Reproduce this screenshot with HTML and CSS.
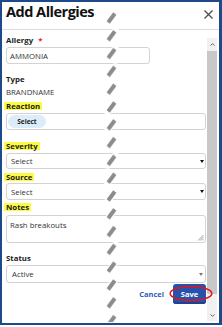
FILE: index.html
```html
<!DOCTYPE html>
<html lang="en">
<head>
<meta charset="utf-8">
<title>Add Allergies</title>
<link rel="stylesheet" href="styles.css">
</head>
<body>
<div class="frame">
  <header class="head">
    <h1 class="title">Add Allergies</h1>
    <svg class="close" viewBox="0 0 9 9" aria-label="Close"><path d="M0.5 0.5 L8.5 8.5 M8.5 0.5 L0.5 8.5" stroke="#4a4a4a" stroke-width="1.2" fill="none"/></svg>
  </header>
  <div class="body">
    <form class="content">
      <div class="label l-allergy">Allergy <span class="req">*</span></div>
      <div class="box short i-allergy">AMMONIA</div>

      <div class="label l-type">Type</div>
      <div class="value">BRANDNAME</div>

      <div class="label hlabel l-reaction"><span class="hl">Reaction</span></div>
      <div class="box multi"><span class="pill">Select</span></div>

      <div class="label hlabel l-severity"><span class="hl">Severity</span></div>
      <div class="box select s-severity"><span>Select</span><span class="caret"></span></div>

      <div class="label hlabel l-source"><span class="hl">Source</span></div>
      <div class="box select s-source"><span>Select</span><span class="caret"></span></div>

      <div class="label hlabel l-notes"><span class="hl">Notes</span></div>
      <div class="box notes"><span class="notes-text">Rash breakouts</span>
        <svg class="grip" viewBox="0 0 7 7"><path d="M6.5 1 L1 6.5 M6.5 3 L3 6.5 M6.5 5 L5 6.5" stroke="#9a9a9a" stroke-width="0.9" fill="none"/></svg>
      </div>

      <div class="label l-status">Status</div>
      <div class="box select s-status"><span>Active</span><span class="caret grey"></span></div>

      <div class="actions">
        <span class="cancel">Cancel</span>
        <span class="save">Save<svg class="ring" viewBox="0 0 44 17"><ellipse cx="22" cy="8.5" rx="20.8" ry="7" fill="none" stroke="#e3141c" stroke-width="1.5"/></svg></span>
      </div>
    </form>
    <div class="sb">
      <span class="sb-btn sb-up"><svg viewBox="0 0 5 3"><path d="M0.5 2.6 L2.5 0.6 L4.5 2.6" stroke="#555" stroke-width="0.9" fill="none"/></svg></span>
      <span class="sb-thumb"></span>
      <span class="sb-track"></span>
      <span class="sb-btn sb-down"><svg viewBox="0 0 5 3"><path d="M0.5 0.4 L2.5 2.4 L4.5 0.4" stroke="#555" stroke-width="0.9" fill="none"/></svg></span>
    </div>
  </div>
  <svg class="cuts" viewBox="0 0 16 321" aria-hidden="true">
    <defs>
      <pattern id="cut" width="16" height="17.8" patternUnits="userSpaceOnUse" y="7.1">
        <path d="M3.6 14.2 L11.4 3.6" stroke="#ffffff" stroke-width="6.5" stroke-linecap="round"/>
        <path d="M4.2 13.4 L10.8 4.4" stroke="#8c8c8c" stroke-width="4"/>
      </pattern>
    </defs>
    <rect x="0" y="7.1" width="16" height="313" fill="url(#cut)"/>
  </svg>
</div>
</body>
</html>
```
FILE: styles.css
```css
html, body {
  margin: 0;
  padding: 0;
  background: #ffffff;
}

body {
  font-family: "Open Sans", "Noto Sans", sans-serif;
  color: #1b1b1b;
}

.frame {
  position: relative;
  width: 222px;
  height: 325px;
  box-sizing: border-box;
  border: 2px solid #1e4a8a;
  border-right-width: 3px;
  background: #ffffff;
  display: flex;
  flex-direction: column;
  overflow: hidden;
}

.head {
  flex: none;
  height: 27px;
  display: flex;
  justify-content: space-between;
  align-items: flex-start;
  border-bottom: 1px solid #dcdcdc;
  padding: 0 6px 0 4px;
}

.title {
  margin: 0;
  font-size: 14.5px;
  line-height: 20px;
  font-weight: 700;
  letter-spacing: -0.5px;
  color: #111111;
}

.close {
  display: block;
  width: 9px;
  height: 9px;
  margin-top: 8px;
}

.body {
  flex: 1;
  min-height: 0;
  display: flex;
  padding-right: 2px;
}

.content {
  flex: 1;
  margin: 0;
  padding: 0 1px 0 4px;
  display: flex;
  flex-direction: column;
}

.label {
  font-size: 7.8px;
  font-weight: 700;
  line-height: 10px;
  color: #1b1b1b;
}

.req {
  color: #e0202a;
  margin-left: 3px;
}

.hlabel {
  line-height: 8px;
  height: 8px;
}

.hl {
  display: inline-block;
  height: 8px;
  padding: 0 2px;
  margin-left: -2px;
  background: #fbfa45;
}

.value {
  font-size: 7.8px;
  line-height: 10px;
  color: #333333;
  margin-top: 3px;
}

.box {
  box-sizing: border-box;
  border: 1px solid #d3d3d3;
  border-radius: 3px;
  font-size: 7.8px;
  line-height: 10px;
  color: #333333;
  display: flex;
  align-items: center;
  padding-left: 3px;
}

.l-allergy { margin-top: 5px; }
.i-allergy { margin-top: 2px; height: 17px; }
.short { width: 144px; }

.l-type { margin-top: 10px; }

.l-reaction { margin-top: 5px; }
.multi {
  margin-top: 3px;
  height: 17px;
  padding-left: 0;
}

.pill {
  width: 38px;
  height: 13px;
  margin-left: 1px;
  border-radius: 7px;
  background: #dcedf9;
  font-size: 6.5px;
  font-weight: 700;
  color: #222222;
  display: flex;
  align-items: center;
  justify-content: center;
}

.select {
  justify-content: space-between;
  padding-left: 4px;
  padding-right: 1px;
}

.caret {
  width: 0;
  height: 0;
  border-left: 2px solid transparent;
  border-right: 2px solid transparent;
  border-top: 3px solid #111111;
}

.caret.grey {
  border-top-color: #7a7a7a;
}

.l-severity { margin-top: 12px; }
.s-severity { margin-top: 3px; height: 16px; }

.l-source { margin-top: 4px; }
.s-source { margin-top: 2px; height: 17px; }

.l-notes { margin-top: 3px; }
.notes {
  margin-top: 4px;
  height: 28px;
  flex-direction: column;
  align-items: stretch;
  padding: 4px 1px 1px 3px;
}

.notes-text {
  display: block;
}

.grip {
  display: block;
  width: 7px;
  height: 7px;
  margin-top: auto;
  align-self: flex-end;
}

.l-status { margin-top: 10px; }
.s-status {
  margin-top: 2px;
  height: 18px;
  padding-left: 5px;
  padding-right: 2px;
}

.actions {
  margin-top: 1px;
  display: flex;
  justify-content: flex-end;
  align-items: center;
}

.cancel {
  font-size: 7.5px;
  font-weight: 700;
  color: #2d5cb8;
  margin-right: 9px;
}

.save {
  position: relative;
  width: 33px;
  height: 20px;
  border-radius: 3px;
  background: #2553ac;
  box-shadow: inset 0 -2px 0 #1d4392;
  color: #ffffff;
  font-size: 7.5px;
  font-weight: 700;
  display: flex;
  align-items: center;
  justify-content: center;
}

.ring {
  position: absolute;
  left: -4px;
  top: 1px;
  width: 44px;
  height: 17px;
  z-index: 3;
}

.sb {
  flex: none;
  width: 10px;
  margin: 8px 0 2px;
  background: #f1f1f1;
  display: flex;
  flex-direction: column;
}

.sb-btn {
  flex: none;
  display: flex;
  align-items: center;
  justify-content: center;
}

.sb-btn svg {
  display: block;
  width: 5px;
  height: 3px;
}

.sb-up { height: 13px; }
.sb-down { height: 12px; }

.sb-thumb {
  flex: none;
  height: 243px;
  background: #c8c8c8;
}

.sb-track { flex: 1; }

.cuts {
  position: absolute;
  left: 102px;
  top: 0;
  width: 16px;
  height: 321px;
  z-index: 5;
  pointer-events: none;
}
```
